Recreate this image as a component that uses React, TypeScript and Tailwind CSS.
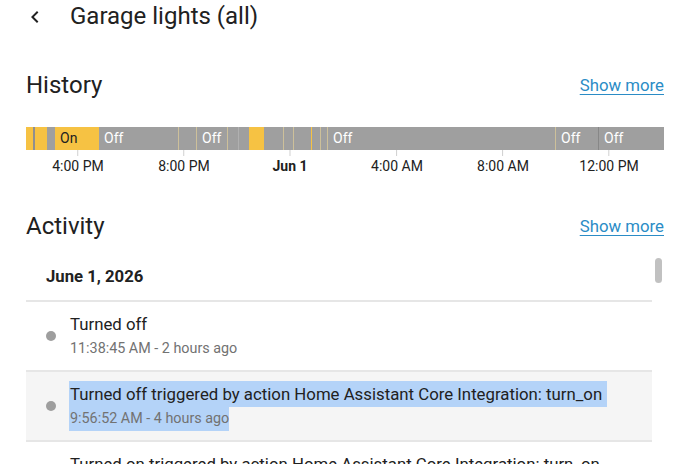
import React from 'react';

type Seg = { from: number; to: number; color: string; label?: string; dark?: boolean };

const YELLOW = '#f6c243';
const GRAY = '#9f9f9f';
const TAN = '#cdc09a';

// bar runs from x=26 to x=664 on screen; values are screen x
const segments: Seg[] = [
  { from: 26, to: 33, color: YELLOW },
  { from: 33, to: 35, color: '#8f8f8f' },
  { from: 35, to: 47, color: YELLOW },
  { from: 47, to: 55, color: GRAY },
  { from: 55, to: 99, color: YELLOW, label: 'On', dark: true },
  { from: 99, to: 178, color: GRAY, label: 'Off' },
  { from: 178, to: 179, color: TAN },
  { from: 179, to: 196, color: GRAY },
  { from: 196, to: 197, color: TAN },
  { from: 197, to: 227, color: GRAY, label: 'Off' },
  { from: 227, to: 228, color: TAN },
  { from: 228, to: 238, color: GRAY },
  { from: 238, to: 239, color: '#b0b0b0' },
  { from: 239, to: 249, color: GRAY },
  { from: 249, to: 264, color: YELLOW },
  { from: 264, to: 283, color: GRAY },
  { from: 283, to: 284, color: TAN },
  { from: 284, to: 293, color: GRAY },
  { from: 293, to: 294, color: TAN },
  { from: 294, to: 311, color: GRAY },
  { from: 311, to: 312, color: YELLOW },
  { from: 312, to: 320, color: GRAY },
  { from: 320, to: 321, color: TAN },
  { from: 321, to: 327, color: GRAY },
  { from: 327, to: 328, color: TAN },
  { from: 328, to: 555, color: GRAY, label: 'Off' },
  { from: 555, to: 556, color: TAN },
  { from: 556, to: 598, color: GRAY, label: 'Off' },
  { from: 598, to: 599, color: '#878787' },
  { from: 599, to: 664, color: GRAY, label: 'Off' },
];

const ticks = [
  { x: 78, label: '4:00 PM' },
  { x: 184, label: '8:00 PM' },
  { x: 290, label: 'Jun 1', bold: true },
  { x: 397, label: '4:00 AM' },
  { x: 503, label: '8:00 AM' },
  { x: 609, label: '12:00 PM' },
];

const SectionHeader = ({ title }: { title: string }) => (
  <div className="flex items-center justify-between h-8">
    <h2 className="text-[24px] leading-8 text-[#212121]">{title}</h2>
    <a href="#" className="text-[16.8px] leading-6 text-[#2b8cc6] underline underline-offset-[3px] decoration-1">
      Show more
    </a>
  </div>
);

const Dot = () => <div className="w-[10px] h-[10px] rounded-full bg-[#9e9e9e] shrink-0" />;

export default function App() {
  return (
    <div className="w-[690px] h-[464px] overflow-hidden bg-white px-[26px] font-['Roboto',sans-serif] text-[#212121]">
      {/* Header */}
      <div className="flex items-center h-8 -ml-[3px]">
        <svg viewBox="0 0 24 24" className="w-6 h-6 mt-[1px]" fill="#212121">
          <path d="M15.41,16.58L10.83,12L15.41,7.41L14,6L8,12L14,18L15.41,16.58Z" />
        </svg>
        <h1 className="ml-[23px] text-[24px] leading-8">Garage lights (all)</h1>
      </div>

      {/* History */}
      <div className="mt-[37px]">
        <SectionHeader title="History" />
      </div>
      <div className="mt-[26px] flex h-[23px] w-[638px] overflow-hidden">
        {segments.map((s, i) => (
          <div
            key={i}
            className={`h-full shrink-0 overflow-hidden whitespace-nowrap text-[14px] leading-[23px] ${s.label ? 'pl-[5px]' : ''}`}
            style={{ width: s.to - s.from, backgroundColor: s.color, color: s.dark ? '#212121' : '#ffffff' }}
          >
            {s.label}
          </div>
        ))}
      </div>
      <div className="relative h-[26px] w-[638px]">
        {ticks.map((t) => (
          <div key={t.label} className="absolute top-0 flex flex-col items-center" style={{ left: t.x - 26, transform: 'translateX(-50%)' }}>
            <div className="w-px h-[6px] bg-[#d0d0d0]" />
            <div className={`text-[14px] leading-5 whitespace-nowrap text-[#212121] ${t.bold ? 'font-bold' : ''}`}>{t.label}</div>
          </div>
        ))}
      </div>

      {/* Activity */}
      <div className="mt-[34px]">
        <SectionHeader title="Activity" />
      </div>
      <div className="relative mt-3 pr-3">
        <div className="absolute right-[2px] top-[4px] w-[7px] h-[25px] rounded-full bg-[#c1c1c1]" />
        <div className="pl-5 pt-[11px] pb-[11px] text-[16.7px] leading-6 font-bold">June 1, 2026</div>
        <div className="h-[2px] bg-[#e6e6e6]" />
        <div className="flex items-center h-[68px] pl-5">
          <Dot />
          <div className="ml-[14px]">
            <div className="text-[16.8px] leading-[26px]">Turned off</div>
            <div className="text-[14.35px] leading-6 text-[#727272]">11:38:45 AM - 2 hours ago</div>
          </div>
        </div>
        <div className="h-[2px] bg-[#e6e6e6]" />
        <div className="flex items-center h-[68px] pl-5 bg-[#f5f5f5]">
          <Dot />
          <div className="ml-[14px] -mt-[1px]">
            <div className="w-fit -ml-px pl-px pr-[5px] bg-[#b4d3f8] text-[16.8px] leading-[26px]">
              Turned off triggered by action Home Assistant Core Integration: turn_on
            </div>
            <div className="w-fit -ml-px pl-px bg-[#b4d3f8] text-[14.35px] leading-6 text-[#727272]">9:56:52 AM - 4 hours ago</div>
          </div>
        </div>
        <div className="h-[2px] bg-[#e6e6e6]" />
        <div className="flex items-start h-[68px] pl-5 pt-[9px]">
          <div className="w-[10px] shrink-0" />
          <div className="ml-[14px] text-[16.8px] leading-[26px] whitespace-nowrap">
            Turned on triggered by action Home Assistant Core Integration: turn_on
          </div>
        </div>
      </div>
    </div>
  );
}
